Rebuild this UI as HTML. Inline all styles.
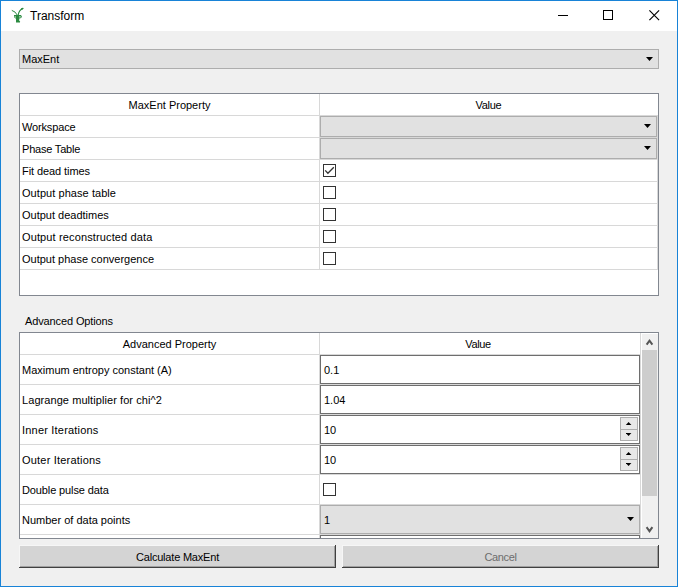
<!DOCTYPE html>
<html><head><meta charset="utf-8">
<style>
html,body{margin:0;padding:0}
body{width:678px;height:587px;position:relative;overflow:hidden;background:#f0f0f0;font-family:"Liberation Sans",sans-serif;font-size:11px;color:#000}
.a{position:absolute;box-sizing:border-box}
.t{position:absolute;white-space:nowrap;line-height:13px;height:13px}
.c{text-align:center}
.hl{position:absolute;height:1px;background:#d8d8d8}
.vl{position:absolute;width:1px;background:#d8d8d8}
.combo{position:absolute;box-sizing:border-box;border:1px solid #adadad;background:#e1e1e1}
.edit{position:absolute;box-sizing:border-box;border:1px solid #6e6e6e;background:#fff}
.cb{position:absolute;box-sizing:border-box;width:13px;height:13px;border:1px solid #333;background:#fff}
.tri{position:absolute;width:7px;height:4px}
.sb{position:absolute;box-sizing:border-box;width:18px;height:12px;border:1px solid #adadad;background:#e8e8e8}
</style></head>
<body>
<!-- window frame -->
<div class="a" style="left:0;top:0;width:678px;height:587px;border:1px solid #1883d7"></div>
<!-- title bar -->
<div class="a" style="left:1px;top:1px;width:676px;height:30px;background:#fff"></div>
<svg class="a" style="left:8px;top:4px" width="20" height="22" viewBox="0 0 20 22">
 <g fill="none" stroke="#2a8a40" stroke-linecap="round">
  <path d="M4.2 6.5 Q7.4 7.3 9.3 11" stroke-width="1"/>
  <path d="M14.8 4.5 Q11 6 10.2 11" stroke-width="1.1"/>
 </g>
 <g fill="#2a8a40">
  <ellipse cx="14.2" cy="4.7" rx="1.4" ry="0.75" transform="rotate(-25 14.2 4.7)"/>
  <path d="M6 11 L12.8 11 L13.9 12.2 L13.6 13.6 L12 14.4 L7.5 14.4 L6 13.2 Z"/>
  <path d="M8 14 L11.2 14 L11.3 17 L12.1 17.3 L12 18.5 L8 18.6 Z"/>
 </g>
 <g fill="#a3cfa9">
  <rect x="6.4" y="12.2" width="1.6" height="1.6"/>
  <rect x="11.1" y="12.1" width="1.7" height="1.5"/>
 </g>
</svg>
<div class="t" style="left:30px;top:9px;font-size:12px;line-height:14px;height:14px">Transform</div>
<div class="a" style="left:558px;top:15px;width:10px;height:1px;background:#000"></div>
<div class="a" style="left:603px;top:10px;width:10px;height:10px;border:1px solid #000"></div>
<svg class="a" style="left:648px;top:9px" width="13" height="13" viewBox="0 0 13 13">
 <path d="M1.4 1.4 L11.1 11.1 M11.1 1.4 L1.4 11.1" stroke="#000" stroke-width="1.15" fill="none"/>
</svg>

<!-- top combo -->
<div class="combo" style="left:19px;top:49px;width:640px;height:20px"></div>
<div class="t" style="left:22px;top:53px">MaxEnt</div>
<svg class="tri" style="left:646px;top:57px" viewBox="0 0 7 4"><polygon points="0,0 7,0 3.5,4" fill="#000"/></svg>

<!-- table 1 -->
<div class="a" style="left:19px;top:93px;width:640px;height:203px;border:1px solid #828790;background:#fff"></div>
<div class="hl" style="left:20px;top:115px;width:638px"></div>
<div class="hl" style="left:20px;top:137px;width:638px"></div>
<div class="hl" style="left:20px;top:159px;width:638px"></div>
<div class="hl" style="left:20px;top:181px;width:638px"></div>
<div class="hl" style="left:20px;top:203px;width:638px"></div>
<div class="hl" style="left:20px;top:225px;width:638px"></div>
<div class="hl" style="left:20px;top:247px;width:638px"></div>
<div class="hl" style="left:20px;top:269px;width:638px"></div>
<div class="vl" style="left:319px;top:94px;height:176px"></div>
<div class="vl" style="left:657px;top:116px;height:154px"></div>
<div class="t c" style="left:20px;top:99px;width:299px">MaxEnt Property</div>
<div class="t c" style="left:320px;top:99px;width:337px;letter-spacing:-0.3px">Value</div>
<div class="t" style="left:22px;top:121px;letter-spacing:-0.15px">Workspace</div>
<div class="t" style="left:22px;top:143px;letter-spacing:-0.2px">Phase Table</div>
<div class="t" style="left:22px;top:165px;letter-spacing:-0.08px">Fit dead times</div>
<div class="t" style="left:22px;top:187px;letter-spacing:0.06px">Output phase table</div>
<div class="t" style="left:22px;top:209px">Output deadtimes</div>
<div class="t" style="left:22px;top:231px;letter-spacing:0.13px">Output reconstructed data</div>
<div class="t" style="left:22px;top:253px">Output phase convergence</div>
<div class="combo" style="left:320px;top:116px;width:337px;height:21px"></div>
<svg class="tri" style="left:644px;top:124px" viewBox="0 0 7 4"><polygon points="0,0 7,0 3.5,4" fill="#000"/></svg>
<div class="combo" style="left:320px;top:138px;width:337px;height:21px"></div>
<svg class="tri" style="left:644px;top:146px" viewBox="0 0 7 4"><polygon points="0,0 7,0 3.5,4" fill="#000"/></svg>
<div class="cb" style="left:323px;top:164px"></div>
<svg class="a" style="left:323px;top:164px" width="13" height="13" viewBox="0 0 13 13"><path d="M2.2 6.4 L4.9 9.3 L10.8 3.3" fill="none" stroke="#333" stroke-width="1.3"/></svg>
<div class="cb" style="left:323px;top:186px"></div>
<div class="cb" style="left:323px;top:208px"></div>
<div class="cb" style="left:323px;top:230px"></div>
<div class="cb" style="left:323px;top:252px"></div>

<!-- advanced options -->
<div class="t" style="left:25px;top:315px;letter-spacing:-0.12px">Advanced Options</div>
<div class="a" style="left:19px;top:332px;width:640px;height:207px;border:1px solid #828790;background:#fff;overflow:hidden">
</div>
<div class="hl" style="left:20px;top:354px;width:620px"></div>
<div class="hl" style="left:20px;top:384px;width:620px"></div>
<div class="hl" style="left:20px;top:414px;width:620px"></div>
<div class="hl" style="left:20px;top:444px;width:620px"></div>
<div class="hl" style="left:20px;top:474px;width:620px"></div>
<div class="hl" style="left:20px;top:504px;width:620px"></div>
<div class="hl" style="left:20px;top:534px;width:620px"></div>
<div class="vl" style="left:319px;top:333px;height:205px"></div>
<div class="t c" style="left:20px;top:338px;width:299px">Advanced Property</div>
<div class="t c" style="left:318px;top:338px;width:320px;letter-spacing:-0.4px">Value</div>
<div class="t" style="left:22px;top:364px">Maximum entropy constant (A)</div>
<div class="t" style="left:22px;top:394px;letter-spacing:0.07px">Lagrange multiplier for chi^2</div>
<div class="t" style="left:22px;top:424px;letter-spacing:0.2px">Inner Iterations</div>
<div class="t" style="left:22px;top:454px;letter-spacing:0.2px">Outer Iterations</div>
<div class="t" style="left:22px;top:484px;letter-spacing:-0.12px">Double pulse data</div>
<div class="t" style="left:22px;top:514px">Number of data points</div>

<div class="edit" style="left:320px;top:355px;width:320px;height:29px"></div>
<div class="t" style="left:324px;top:364px">0.1</div>
<div class="edit" style="left:320px;top:385px;width:320px;height:29px"></div>
<div class="t" style="left:324px;top:394px">1.04</div>
<div class="edit" style="left:320px;top:415px;width:320px;height:29px"></div>
<div class="t" style="left:324px;top:424px">10</div>
<div class="sb" style="left:620px;top:417px;height:13px"></div>
<div class="sb" style="left:620px;top:429px;height:12px"></div>
<svg class="a" style="left:626px;top:422px" width="6" height="3" viewBox="0 0 6 3" overflow="visible"><polygon points="-0.2,3 5.4,3 2.6,0" fill="#000"/></svg>
<svg class="a" style="left:626px;top:433px" width="6" height="3" viewBox="0 0 6 3"><polygon points="-0.2,0 5.4,0 2.6,3" fill="#000"/></svg>
<div class="edit" style="left:320px;top:445px;width:320px;height:29px"></div>
<div class="t" style="left:324px;top:454px">10</div>
<div class="sb" style="left:620px;top:447px;height:13px"></div>
<div class="sb" style="left:620px;top:459px;height:12px"></div>
<svg class="a" style="left:626px;top:452px" width="6" height="3" viewBox="0 0 6 3"><polygon points="-0.2,3 5.4,3 2.6,0" fill="#000"/></svg>
<svg class="a" style="left:626px;top:463px" width="6" height="3" viewBox="0 0 6 3"><polygon points="-0.2,0 5.4,0 2.6,3" fill="#000"/></svg>
<div class="cb" style="left:323px;top:483px"></div>
<div class="combo" style="left:320px;top:505px;width:320px;height:29px"></div>
<div class="t" style="left:324px;top:514px">1</div>
<svg class="tri" style="left:627px;top:517px" viewBox="0 0 7 4"><polygon points="0,0 7,0 3.5,4" fill="#000"/></svg>
<div class="edit" style="left:320px;top:535px;width:320px;height:29px;border-bottom:none;height:3px"></div>

<!-- scrollbar -->
<div class="a" style="left:640px;top:333px;width:1px;height:205px;background:#d8d8d8"></div>
<div class="a" style="left:641px;top:333px;width:17px;height:205px;background:#fff"></div>
<div class="a" style="left:642px;top:334px;width:16px;height:204px;background:#f0f0f0"></div>
<div class="a" style="left:642px;top:350px;width:15px;height:146px;background:#cdcdcd"></div>
<svg class="a" style="left:645px;top:337px" width="10" height="9" viewBox="0 0 10 9"><path d="M2.2 6.8 L4.5 3.6 L6.8 6.8" fill="none" stroke="#555" stroke-width="2" stroke-linecap="square"/></svg>
<svg class="a" style="left:645px;top:525px" width="10" height="9" viewBox="0 0 10 9"><path d="M2.2 3 L4.5 6.2 L6.8 3" fill="none" stroke="#555" stroke-width="2" stroke-linecap="square"/></svg>

<!-- buttons -->
<div class="a" style="left:19px;top:545px;width:317px;height:23px;background:#404040"></div>
<div class="a" style="left:19px;top:545px;width:316px;height:22px;background:#f6f6f6"></div>
<div class="a" style="left:20px;top:546px;width:315px;height:21px;background:#a0a0a0"></div>
<div class="a" style="left:20px;top:546px;width:314px;height:20px;background:#d4d4d4"></div>
<div class="t c" style="left:19px;top:551px;width:317px;letter-spacing:-0.2px">Calculate MaxEnt</div>

<div class="a" style="left:342px;top:545px;width:317px;height:23px;background:#404040"></div>
<div class="a" style="left:342px;top:545px;width:316px;height:22px;background:#f6f6f6"></div>
<div class="a" style="left:343px;top:546px;width:315px;height:21px;background:#a0a0a0"></div>
<div class="a" style="left:343px;top:546px;width:314px;height:20px;background:#d4d4d4"></div>
<div class="t c" style="left:342px;top:551px;width:317px;color:#6d6d6d;letter-spacing:-0.4px">Cancel</div>
</body></html>
